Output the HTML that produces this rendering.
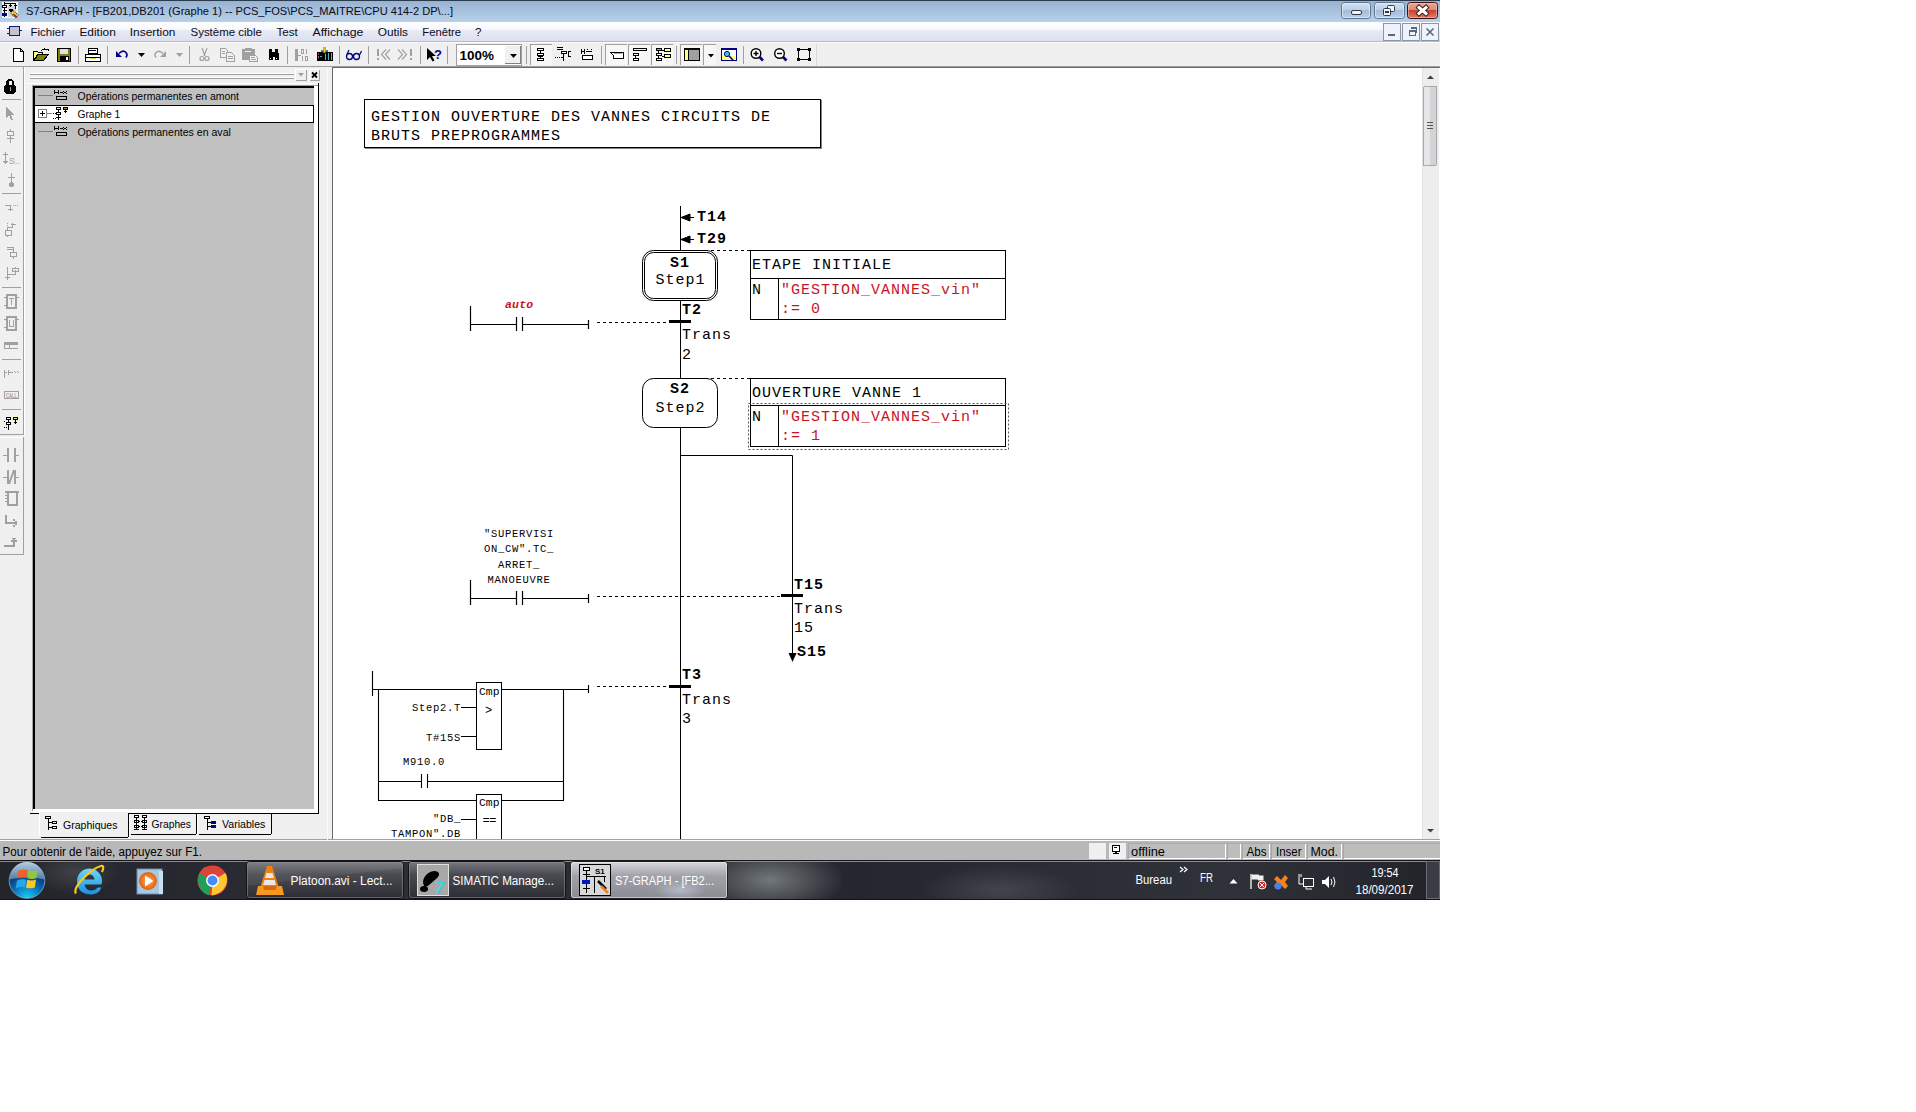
<!DOCTYPE html>
<html><head><meta charset="utf-8">
<style>
*{margin:0;padding:0;box-sizing:border-box}
html,body{width:1916px;height:1112px;background:#fff;overflow:hidden;font-family:"Liberation Sans",sans-serif;font-size:12px;color:#000}
.a{position:absolute}
svg{position:absolute;left:0;top:0;overflow:visible}
#title{left:0;top:0;width:1440px;height:22px;background:linear-gradient(#2b3b4e 0,#2b3b4e 1px,#98b2d0 1px,#a9c3df 12px,#b7d1ea 22px)}
#menu{left:0;top:22px;width:1440px;height:19px;background:linear-gradient(#fdfdfe 0,#f8f9fc 38%,#e9ebf5 42%,#dcdff0 100%)}
#mline{left:0;top:41px;width:1440px;height:2px;background:linear-gradient(#b9bcc6 0,#b9bcc6 1px,#fafafa 1px)}
#tool{left:0;top:43px;width:1440px;height:23px;background:#f0f0f0}
#tline{left:0;top:66px;width:1440px;height:1px;background:#a0a0a0}
#main{left:0;top:67px;width:1440px;height:773px;background:#f0f0f0}
#status{left:0;top:839px;width:1440px;height:21px;background:linear-gradient(#a0a0a0 0,#a0a0a0 1px,#fff 1px,#fff 2px,#b8b8b8 2px)}
#task{left:0;top:860px;width:1440px;height:40px;background:linear-gradient(90deg,#24242b 0,#2d2e36 30%,#26262e 60%,#303239 85%,#23232a 100%)}
</style></head><body>
<div id="title" class="a"></div>
<div id="menu" class="a"></div>
<div id="mline" class="a"></div>
<div id="tool" class="a"></div>
<div id="tline" class="a"></div>
<div id="main" class="a"></div>
<div id="status" class="a"></div>
<div id="task" class="a"></div>
<!-- canvas -->
<div class="a" style="left:332px;top:67px;width:1108px;height:772px;border-left:1px solid #6a6a6a;border-top:1px solid #6a6a6a;background:#fff"></div>
<div class="a" style="left:1422px;top:68px;width:17px;height:771px;background:#ededed;border-left:1px solid #e3e3e3"></div>
<svg width="1440" height="900" viewBox="0 0 1440 900">
<defs><clipPath id="cv"><rect x="333" y="68" width="1089" height="771"/></clipPath></defs>
<g font-family="Liberation Mono" fill="#000" clip-path="url(#cv)">
<!-- comment box -->
<rect x="365" y="100" width="457" height="49" fill="#808080"/>
<rect x="364.5" y="99.5" width="456" height="48" fill="#fff" stroke="#000"/>
<g font-size="15" letter-spacing="1">
<text x="371" y="120.7">GESTION OUVERTURE DES VANNES CIRCUITS DE</text>
<text x="371" y="139.7">BRUTS PREPROGRAMMES</text>
</g>
<!-- main line -->
<path d="M680.5 206V250M680.5 301V378M680.5 428V839" stroke="#000" fill="none"/>
<!-- incoming arrows -->
<path d="M681 217.5L690 214V221Z M688 217.5H694 M681 239.5L690 236V243Z M688 239.5H694" fill="#000" stroke="#000" stroke-width="1"/>
<g font-size="15" font-weight="bold" letter-spacing="1">
<text x="697" y="221">T14</text>
<text x="697" y="243">T29</text>
</g>
<!-- S1 double box -->
<rect x="642.5" y="250.5" width="75" height="50" rx="11" fill="#fff" stroke="#000"/>
<rect x="644.5" y="252.5" width="71" height="46" rx="9" fill="none" stroke="#000"/>
<text x="670" y="267" font-size="15" font-weight="bold" letter-spacing="1">S1</text>
<text x="655.5" y="284" font-size="15" letter-spacing="1">Step1</text>
<path d="M705 250.5H750" stroke="#000" stroke-dasharray="3,3"/>
<!-- action table 1 -->
<rect x="750.5" y="250.5" width="255" height="69" fill="none" stroke="#000"/>
<path d="M750 278.5H1006M778.5 279V320" stroke="#000"/>
<g font-size="15" letter-spacing="1">
<text x="752" y="268.7">ETAPE INITIALE</text>
<text x="752" y="293.8">N</text>
<text x="781" y="293.8" fill="#c8141e">"GESTION_VANNES_vin"</text>
<text x="781" y="313" fill="#c8141e">:= 0</text>
</g>
<!-- T2 -->
<rect x="669" y="320" width="22" height="3" fill="#000"/>
<g font-size="15" letter-spacing="1">
<text x="682" y="314.3" font-weight="bold">T2</text>
<text x="682" y="338.8">Trans</text>
<text x="682" y="358.7">2</text>
</g>
<path d="M597 322.5H669" stroke="#000" stroke-dasharray="3,3"/>
<!-- auto contact -->
<path d="M470.5 306V331M470 324.5H517M516.5 317V331M522.5 317V331M522 324.5H589M588.5 320V329" stroke="#000" stroke-width="1.2" fill="none"/>
<text x="505" y="308" font-size="11.5" font-weight="bold" fill="#c8141e" letter-spacing="0.2" font-style="italic">auto</text>
<!-- S2 -->
<rect x="642.5" y="378.5" width="75" height="49" rx="11" fill="#fff" stroke="#000"/>
<text x="670" y="393" font-size="15" font-weight="bold" letter-spacing="1">S2</text>
<text x="655.5" y="412" font-size="15" letter-spacing="1">Step2</text>
<path d="M705 378.5H750" stroke="#000" stroke-dasharray="3,3"/>
<!-- action table 2 -->
<rect x="750.5" y="378.5" width="255" height="68" fill="none" stroke="#000"/>
<path d="M750 405.5H1006M778.5 406V447" stroke="#000"/>
<rect x="748.5" y="403.5" width="260" height="46" fill="none" stroke="#555" stroke-dasharray="2,2"/>
<g font-size="15" letter-spacing="1">
<text x="752" y="396.5">OUVERTURE VANNE 1</text>
<text x="752" y="420.5">N</text>
<text x="781" y="420.5" fill="#c8141e">"GESTION_VANNES_vin"</text>
<text x="781" y="440.4" fill="#c8141e">:= 1</text>
</g>
<!-- branch -->
<path d="M680 455.5H792.5V654" stroke="#000" fill="none"/>
<path d="M788.5 653H796.5L792.5 662Z" fill="#000"/>
<rect x="781" y="594" width="22" height="3" fill="#000"/>
<g font-size="15" letter-spacing="1">
<text x="794" y="589" font-weight="bold">T15</text>
<text x="794" y="612.7">Trans</text>
<text x="794" y="632.3">15</text>
<text x="797" y="656.1" font-weight="bold">S15</text>
</g>
<path d="M597 596.5H781" stroke="#000" stroke-dasharray="3,3"/>
<!-- supervision contact -->
<path d="M470.5 580V605M470 598.5H517M516.5 591V605M522.5 591V605M522 598.5H589M588.5 594V603" stroke="#000" stroke-width="1.2" fill="none"/>
<g font-size="10.5" letter-spacing="0.7" text-anchor="middle">
<text x="519" y="537">"SUPERVISI</text>
<text x="519" y="552">ON_CW".TC_</text>
<text x="519" y="567.8">ARRET_</text>
<text x="519" y="582.8">MANOEUVRE</text>
</g>
<!-- T3 -->
<rect x="669" y="685" width="22" height="3" fill="#000"/>
<g font-size="15" letter-spacing="1">
<text x="682" y="678.8" font-weight="bold">T3</text>
<text x="682" y="703.7">Trans</text>
<text x="682" y="722.5">3</text>
</g>
<path d="M597 686.5H669" stroke="#000" stroke-dasharray="3,3"/>
<!-- T3 network -->
<path d="M372.5 671V696M372 689.5H476.5M501.5 689.5H589M588.5 685V693M378.5 689V800.5M563.5 689V800.5M378 781.5H421.5M421.5 774V788M427.5 774V788M427.5 781.5H564M378 800.5H476.5M501.5 800.5H564M461 707.5H476.5M461 736.5H476.5M461 819.5H476.5" stroke="#000" stroke-width="1.1" fill="none"/>
<rect x="476.5" y="682.5" width="25" height="67" fill="#fff" stroke="#000"/>
<rect x="476.5" y="794.5" width="25" height="60" fill="#fff" stroke="#000"/>
<g font-size="10.5" letter-spacing="0.7">
<text x="479" y="695" font-size="11" letter-spacing="0" textLength="20.5" lengthAdjust="spacingAndGlyphs">Cmp</text>
<text x="479" y="806" font-size="11" letter-spacing="0" textLength="20.5" lengthAdjust="spacingAndGlyphs">Cmp</text>
<text x="485" y="714" font-size="12">&gt;</text>
<text x="482.5" y="824" font-size="12" letter-spacing="-0.5">==</text>
<text x="461" y="711" text-anchor="end">Step2.T</text>
<text x="461" y="740.6" text-anchor="end">T#15S</text>
<text x="403" y="765">M910.0</text>
<text x="461" y="822.4" text-anchor="end">"DB_</text>
<text x="461" y="837.4" text-anchor="end">TAMPON".DB</text>
</g>
</g>
</svg>
<svg width="1440" height="900" viewBox="0 0 1440 900">
<defs>
<linearGradient id="gbtn" x1="0" y1="0" x2="0" y2="1"><stop offset="0" stop-color="#d2e1f1"/><stop offset="0.45" stop-color="#bcd0e6"/><stop offset="0.5" stop-color="#a5bdd8"/><stop offset="1" stop-color="#b9d0e9"/></linearGradient>
<linearGradient id="gcls" x1="0" y1="0" x2="0" y2="1"><stop offset="0" stop-color="#eba89a"/><stop offset="0.45" stop-color="#dd8a78"/><stop offset="0.5" stop-color="#c9452b"/><stop offset="1" stop-color="#e0806a"/></linearGradient>
</defs>
<!-- ===== TITLE BAR ===== -->
<g shape-rendering="crispEdges">
<rect x="2" y="2" width="16" height="16" fill="#f4f4f4"/>
<rect x="8" y="6" width="8" height="11" fill="#d4d4d4"/>
<rect x="4" y="2" width="1" height="15" fill="#000"/>
<rect x="4" y="3" width="12" height="1" fill="#000"/>
<rect x="2" y="5" width="5" height="3" fill="#000"/><rect x="3" y="6" width="3" height="1" fill="#fff"/>
<rect x="3" y="10" width="4" height="1" fill="#000"/>
<rect x="2" y="13" width="5" height="3" fill="#000a80"/>
<rect x="10" y="3" width="1" height="4" fill="#000"/><rect x="9" y="5" width="3" height="1" fill="#000"/>
<rect x="15" y="3" width="1" height="6" fill="#000"/><rect x="14" y="5" width="3" height="1" fill="#000"/>
<rect x="9" y="9" width="4" height="2" fill="#000"/><rect x="10" y="11" width="2" height="1" fill="#000"/>
</g>
<path d="M12 12L17.5 17" stroke="#000" stroke-width="4.5" stroke-dasharray="1,1"/>
<path d="M12 12L17.5 17" stroke="#f0e040" stroke-width="3"/>
<path d="M13 14L17.5 17.5" stroke="#a01000" stroke-width="1.5"/>
<text x="26" y="15" font-size="11.6" fill="#0a0a14" textLength="427" lengthAdjust="spacingAndGlyphs">S7-GRAPH - [FB201,DB201 (Graphe 1) -- PCS_FOS\PCS_MAITRE\CPU 414-2 DP\...]</text>
<!-- window buttons -->
<rect x="1341.5" y="2.5" width="29" height="16" rx="3" fill="url(#gbtn)" stroke="#5a7492"/>
<rect x="1342.5" y="3.5" width="27" height="14" rx="2" fill="none" stroke="#e6f0fa" stroke-opacity="0.7"/>
<rect x="1351.5" y="10.5" width="10" height="4" rx="1.5" fill="#f4f4f4" stroke="#2c3a4c"/>
<rect x="1374.5" y="2.5" width="30" height="16" rx="3" fill="url(#gbtn)" stroke="#5a7492"/>
<rect x="1375.5" y="3.5" width="28" height="14" rx="2" fill="none" stroke="#e6f0fa" stroke-opacity="0.7"/>
<rect x="1387.5" y="5.5" width="7" height="6" rx="1" fill="#f4f4f4" stroke="#2c3a4c"/>
<rect x="1383.5" y="8.5" width="7" height="7" rx="1" fill="#f4f4f4" stroke="#2c3a4c"/>
<rect x="1385.5" y="11.5" width="3" height="1" fill="none" stroke="#2c3a4c"/>
<rect x="1407.5" y="2.5" width="30" height="16" rx="3" fill="url(#gcls)" stroke="#3d1212"/>
<rect x="1408.5" y="3.5" width="28" height="14" rx="2" fill="none" stroke="#f6c6bb" stroke-opacity="0.6"/>
<path d="M1419 7.5L1426 13.5M1426 7.5L1419 13.5" stroke="#3a2020" stroke-width="5" stroke-linecap="square"/>
<path d="M1419 7.5L1426 13.5M1426 7.5L1419 13.5" stroke="#fff" stroke-width="3" stroke-linecap="square"/>
<!-- ===== MENU BAR ===== -->
<g shape-rendering="crispEdges">
<rect x="9" y="26" width="10" height="9" fill="#c4c4c4" stroke="#0a1a8a" stroke-width="1"/>
<rect x="7" y="28" width="2" height="1" fill="#0a1a8a"/><rect x="7" y="33" width="2" height="1" fill="#0a1a8a"/><rect x="19" y="30" width="3" height="1" fill="#0a1a8a"/>
</g>
<g font-size="11.6" fill="#0c0c18">
<text x="30.5" y="35.6" textLength="34.5" lengthAdjust="spacingAndGlyphs">Fichier</text>
<text x="79.4" y="35.6" textLength="36.4" lengthAdjust="spacingAndGlyphs">Edition</text>
<text x="129.8" y="35.6" textLength="45.6" lengthAdjust="spacingAndGlyphs">Insertion</text>
<text x="190.5" y="35.6" textLength="71.4" lengthAdjust="spacingAndGlyphs">Système cible</text>
<text x="276.4" y="35.6" textLength="21.3" lengthAdjust="spacingAndGlyphs">Test</text>
<text x="312.5" y="35.6" textLength="50.9" lengthAdjust="spacingAndGlyphs">Affichage</text>
<text x="377.7" y="35.6" textLength="30.3" lengthAdjust="spacingAndGlyphs">Outils</text>
<text x="422.3" y="35.6" textLength="38.7" lengthAdjust="spacingAndGlyphs">Fenêtre</text>
<text x="475" y="35.6">?</text>
</g>
<g shape-rendering="crispEdges" fill="#eef2fa" stroke="#8a97a8">
<rect x="1383.5" y="23.5" width="17" height="17"/>
<rect x="1402.5" y="23.5" width="17" height="17"/>
<rect x="1421.5" y="23.5" width="17" height="17"/>
</g>
<g shape-rendering="crispEdges" fill="#5a6878">
<rect x="1388" y="34" width="7" height="2"/>
<path d="M1409 30h7v2h-7zM1409 30h1v6h-1zM1409 35h6v1h-6zM1415 30h1v6h-1zM1411 27h6v2h-6zM1416 27h1v6h-1z"/>
</g>
<path d="M1426.5 28.5L1433.5 35.5M1433.5 28.5L1426.5 35.5" stroke="#5a6878" stroke-width="1.6"/>
<!-- ===== TOOLBAR ===== -->
<g shape-rendering="crispEdges">
<!-- new -->
<path d="M13.5 48.5h7l3 3v9.5h-10z" fill="#fff" stroke="#000"/>
<path d="M20.5 48.5v3h3" fill="none" stroke="#000"/>
<!-- open -->
<path d="M33.5 51.5h4l1 1h4v2h-5l-4 6z" fill="#ffff80" stroke="#000"/>
<path d="M33.5 60.5h10l5-6h-10z" fill="#808000" stroke="#000"/>
<path d="M41 51q3-3.5 6-1" fill="none" stroke="#000" stroke-width="1.2"/>
<path d="M45.5 48.5h3v3z" fill="#000"/>
<!-- save -->
<rect x="57.5" y="48.5" width="13" height="13" fill="#808000" stroke="#000"/>
<rect x="60" y="49" width="8" height="5" fill="#e0e0e0"/>
<rect x="60" y="56" width="9" height="5" fill="#000"/>
<rect x="66" y="57" width="2" height="3" fill="#fff"/>
<!-- sep -->
<rect x="78" y="46" width="1" height="18" fill="#a0a0a0"/>
<!-- print -->
<path d="M88.5 48.5h9v5h-9z" fill="#fff" stroke="#000"/>
<path d="M85.5 54.5h15v7h-15z" fill="#fff" stroke="#000"/>
<rect x="86" y="57" width="14" height="1" fill="#000"/>
<rect x="90" y="58" width="6" height="1" fill="#c0e040"/>
<rect x="89" y="50" width="7" height="1" fill="#000"/>
<!-- sep -->
<rect x="107" y="46" width="1" height="18" fill="#a0a0a0"/>
</g>
<!-- undo -->
<path d="M119 53.5q4-4 7-1q2 2 0 5" fill="none" stroke="#000080" stroke-width="1.6"/>
<path d="M116 51v6h6z" fill="#000080"/>
<path d="M138 53h7l-3.5 4z" fill="#000"/>
<path d="M163 53.5q-4-4-7-1q-2 2 0 5" fill="none" stroke="#a0a0a0" stroke-width="1.4"/>
<path d="M166 51v6h-6z" fill="#a0a0a0"/>
<path d="M176 53h7l-3.5 4z" fill="#a0a0a0"/>
<g shape-rendering="crispEdges">
<rect x="189" y="46" width="1" height="18" fill="#a0a0a0"/>
</g>
<!-- scissors -->
<path d="M202 48l3 8M207 48l-3 8" stroke="#a0a0a0" stroke-width="1.2"/>
<circle cx="202" cy="58.5" r="2" fill="none" stroke="#a0a0a0" stroke-width="1.2"/>
<circle cx="207" cy="58.5" r="2" fill="none" stroke="#a0a0a0" stroke-width="1.2"/>
<g shape-rendering="crispEdges">
<!-- copy -->
<path d="M220.5 48.5h5l2 2v6.5h-7z" fill="#f0f0f0" stroke="#a0a0a0"/>
<path d="M226.5 52.5h5l3 3v5.5h-8z" fill="#f0f0f0" stroke="#a0a0a0"/>
<rect x="222" y="51" width="3" height="1" fill="#a0a0a0"/><rect x="222" y="53" width="3" height="1" fill="#a0a0a0"/>
<rect x="228" y="56" width="5" height="1" fill="#a0a0a0"/><rect x="228" y="58" width="5" height="1" fill="#a0a0a0"/>
<!-- paste -->
<rect x="242" y="49" width="13" height="11" fill="#a0a0a0"/>
<rect x="245" y="48" width="7" height="2" fill="#a0a0a0"/>
<rect x="245" y="51" width="6" height="1" fill="#f0f0f0"/>
<path d="M249.5 55.5h6l2 2v4h-8z" fill="#f0f0f0" stroke="#a0a0a0"/>
<rect x="251" y="57" width="4" height="1" fill="#a0a0a0"/><rect x="251" y="59" width="5" height="1" fill="#a0a0a0"/>
<!-- binoculars -->
<path d="M269 49h3v3h3v-3h3v4h1v7h-4v-3h-2v3h-4v-7h0z" fill="#000"/>
<rect x="270" y="58" width="1" height="1" fill="#fff"/><rect x="276" y="58" width="1" height="1" fill="#fff"/>
<rect x="287" y="46" width="1" height="18" fill="#a0a0a0"/>
<!-- compile gray -->
<path d="M295.5 49.5h2v11h-2z" fill="none" stroke="#a0a0a0" stroke-width="1"/>
<rect x="295" y="49" width="3" height="12" fill="#a0a0a0"/>
<path d="M298 55h3" stroke="#a0a0a0"/>
<rect x="301.5" y="49.5" width="2" height="4" fill="none" stroke="#a0a0a0"/>
<rect x="306" y="49" width="1" height="5" fill="#a0a0a0"/>
<rect x="302" y="56" width="1" height="5" fill="#a0a0a0"/>
<rect x="305.5" y="56.5" width="2" height="4" fill="none" stroke="#a0a0a0"/>
<!-- download -->
<rect x="317" y="52" width="16" height="9" fill="#000"/>
<rect x="325" y="53" width="1" height="7" fill="#40c0c0"/><rect x="328" y="53" width="1" height="7" fill="#40c0c0"/><rect x="331" y="53" width="1" height="7" fill="#40c0c0"/>
<rect x="318" y="53" width="1" height="2" fill="#c04040"/><rect x="318" y="56" width="1" height="2" fill="#808080"/>
<path d="M320 56l2 1" stroke="#40c0c0"/>
</g>
<path d="M324.5 47v5M321.5 50.5l3 3l3-3" fill="none" stroke="#000" stroke-width="1.6"/>
<path d="M324.5 47v5M322.5 51l2 2l2-2" fill="none" stroke="#ffff40" stroke-width="0.8"/>
<g shape-rendering="crispEdges">
<rect x="339" y="46" width="1" height="18" fill="#a0a0a0"/>
</g>
<!-- glasses -->
<circle cx="349.5" cy="56.5" r="3" fill="none" stroke="#000080" stroke-width="1.3"/>
<circle cx="356.5" cy="56.5" r="3" fill="none" stroke="#000080" stroke-width="1.3"/>
<path d="M347 54l2-4M359.5 55l2-4" fill="none" stroke="#000080" stroke-width="1.2"/>
<g shape-rendering="crispEdges">
<rect x="368" y="46" width="1" height="18" fill="#a0a0a0"/>
<rect x="377" y="49" width="2" height="7" fill="#a0a0a0"/><rect x="377" y="58" width="2" height="2" fill="#a0a0a0"/>
<rect x="410" y="49" width="2" height="7" fill="#a0a0a0"/><rect x="410" y="58" width="2" height="2" fill="#a0a0a0"/>
</g>
<path d="M386 49.5l-4.5 5l4.5 5M390 49.5l-4.5 5l4.5 5" fill="none" stroke="#a0a0a0" stroke-width="1.2"/>
<path d="M398 49.5l4.5 5l-4.5 5M402 49.5l4.5 5l-4.5 5" fill="none" stroke="#a0a0a0" stroke-width="1.2"/>
<g shape-rendering="crispEdges">
<rect x="420" y="46" width="1" height="18" fill="#a0a0a0"/>
</g>
<!-- help -->
<path d="M427 48v12l3-3l2.5 4.5l2-1l-2.5-4.5h4z" fill="#000"/>
<text x="434" y="59" font-size="13" font-weight="bold" fill="#000080">?</text>
<g shape-rendering="crispEdges">
<rect x="447" y="46" width="1" height="18" fill="#a0a0a0"/>
<!-- combo -->
<rect x="456" y="44" width="66" height="22" fill="#a0a0a0"/>
<rect x="457" y="45" width="64" height="20" fill="#fff"/>
<rect x="505" y="46" width="16" height="18" fill="#f0f0f0"/>
<rect x="505" y="63" width="16" height="1" fill="#808080"/><rect x="520" y="46" width="1" height="18" fill="#808080"/>
</g>
<path d="M510 54h7l-3.5 4z" fill="#000"/>
<text x="459.5" y="59.7" font-size="13" font-weight="bold" textLength="34.5" lengthAdjust="spacingAndGlyphs">100%</text>
<g shape-rendering="crispEdges">
<rect x="526" y="46" width="1" height="18" fill="#a0a0a0"/>
<!-- pressed buttons -->
<path d="M530.5 65V44.5H552" fill="#f7f7f7" stroke="#a0a0a0"/>
<rect x="531" y="45" width="21" height="20" fill="#f7f7f7"/>
<rect x="601" y="46" width="1" height="18" fill="#a0a0a0"/>
<rect x="605" y="44" width="22" height="21" fill="#a0a0a0"/><rect x="606" y="45" width="21" height="20" fill="#f7f7f7"/>
<rect x="628" y="44" width="22" height="21" fill="#a0a0a0"/><rect x="629" y="45" width="21" height="20" fill="#f7f7f7"/>
<rect x="651" y="44" width="22" height="21" fill="#a0a0a0"/><rect x="652" y="45" width="21" height="20" fill="#f7f7f7"/>
<rect x="676" y="46" width="1" height="18" fill="#a0a0a0"/>
<rect x="680" y="44" width="22" height="21" fill="#a0a0a0"/><rect x="681" y="45" width="21" height="20" fill="#f7f7f7"/>
<rect x="703" y="44" width="13" height="21" fill="#a0a0a0"/><rect x="704" y="45" width="12" height="20" fill="#f7f7f7"/>
<rect x="743" y="46" width="1" height="18" fill="#a0a0a0"/>
<rect x="816" y="44" width="1" height="22" fill="#d8d8d8"/>
<!-- sfc view icon -->
<rect x="537" y="48" width="7" height="3" fill="#000"/><rect x="538" y="49" width="5" height="1" fill="#fff"/>
<rect x="540" y="51" width="1" height="10" fill="#000"/>
<rect x="537" y="53" width="7" height="3" fill="#000"/><rect x="538" y="54" width="5" height="1" fill="#fff"/>
<rect x="537" y="58" width="7" height="3" fill="#000"/><rect x="538" y="59" width="5" height="1" fill="#fff"/>
<rect x="538" y="56" width="5" height="1" fill="#000"/>
<!-- icon 2 -->
<rect x="557" y="47" width="6" height="1" fill="#000"/><rect x="557" y="49" width="6" height="1" fill="#000"/>
<rect x="561" y="51" width="6" height="3" fill="#000"/><rect x="562" y="52" width="4" height="1" fill="#fff"/>
<rect x="563" y="54" width="1" height="7" fill="#000"/>
<rect x="555" y="57" width="1" height="1" fill="#000"/><rect x="557" y="57" width="1" height="1" fill="#000"/><rect x="559" y="57" width="1" height="1" fill="#000"/><rect x="561" y="57" width="2" height="1" fill="#000"/>
<rect x="568" y="51" width="1" height="6" fill="#000"/><rect x="568" y="51" width="3" height="1" fill="#000"/><rect x="568" y="56" width="3" height="1" fill="#000"/>
<!-- icon 3 -->
<rect x="581" y="49" width="1" height="5" fill="#000"/><rect x="581" y="51" width="4" height="1" fill="#000"/><rect x="584" y="49" width="1" height="5" fill="#000"/>
<rect x="586" y="51" width="6" height="1" fill="#000"/><rect x="587" y="49" width="1" height="1" fill="#000"/><rect x="591" y="49" width="1" height="1" fill="#000"/>
<rect x="582" y="55" width="11" height="5" fill="#000"/><rect x="583" y="56" width="9" height="3" fill="#fff"/>
<!-- comment icon -->
<path d="M610 52l3 3v3h10v-6z" fill="#fff" stroke="#000"/>
<rect x="614" y="53" width="8" height="1" fill="#40c8d8"/>
<!-- yellow -->
<rect x="633" y="48" width="14" height="3" fill="#000"/><rect x="634" y="49" width="12" height="1" fill="#ffff80"/>
<rect x="633" y="53" width="6" height="3" fill="#000"/><rect x="634" y="54" width="4" height="1" fill="#fff"/>
<rect x="635" y="56" width="1" height="3" fill="#000"/>
<rect x="633" y="58" width="6" height="3" fill="#000"/><rect x="634" y="59" width="4" height="1" fill="#fff"/>
<!-- icon graph -->
<rect x="656" y="48" width="6" height="3" fill="#000"/><rect x="657" y="49" width="4" height="1" fill="#40c0c0"/>
<rect x="658" y="51" width="1" height="10" fill="#000"/>
<rect x="656" y="53" width="6" height="3" fill="#000"/><rect x="657" y="54" width="4" height="1" fill="#fff"/>
<rect x="656" y="58" width="6" height="3" fill="#000"/><rect x="657" y="59" width="4" height="1" fill="#fff"/>
<rect x="664" y="48" width="7" height="4" fill="#000"/><rect x="665" y="49" width="5" height="2" fill="#ffff80"/>
<rect x="664" y="54" width="7" height="4" fill="#000"/><rect x="665" y="55" width="5" height="2" fill="#ffff80"/>
<rect x="662" y="50" width="2" height="1" fill="#000"/><rect x="662" y="56" width="2" height="1" fill="#000"/>
<!-- window icon -->
<rect x="684" y="48" width="16" height="13" fill="#000"/><rect x="685" y="50" width="3" height="10" fill="#ffff80"/><rect x="689" y="50" width="10" height="10" fill="#a0a0a0"/>
<rect x="685" y="49" width="14" height="1" fill="#000080"/>
<!-- magnifier window -->
<rect x="721" y="48" width="16" height="13" fill="#000080"/><rect x="722" y="50" width="14" height="10" fill="#fff"/><rect x="722" y="56" width="14" height="4" fill="#ffff80"/>
<!-- zoom in/out/fit -->
<rect x="798" y="49" width="12" height="11" fill="none" stroke="#000" stroke-width="0"/>
<path d="M798.5 49.5h11v10h-11z" fill="none" stroke="#000" stroke-width="1.4"/>
<rect x="797" y="48" width="3" height="3" fill="#000"/><rect x="808" y="48" width="3" height="3" fill="#000"/><rect x="797" y="58" width="3" height="3" fill="#000"/><rect x="808" y="58" width="3" height="3" fill="#000"/>
</g>
<path d="M708 54h6l-3 3.5z" fill="#000"/>
<circle cx="727" cy="54" r="2.6" fill="#40c8d8" stroke="#000080" stroke-width="1"/>
<path d="M729 56l4 4" stroke="#000080" stroke-width="1.6"/>
<circle cx="756" cy="53.5" r="4.8" fill="#fff" stroke="#000" stroke-width="1.4"/>
<path d="M753.5 53.5h5M756 51v5" stroke="#000" stroke-width="1.4"/>
<path d="M759.5 57l3.5 3.5" stroke="#000080" stroke-width="2.6"/>
<circle cx="779.5" cy="53.5" r="4.8" fill="#fff" stroke="#000" stroke-width="1.4"/>
<path d="M777 53.5h5" stroke="#000" stroke-width="1.4"/>
<path d="M783 57l3.5 3.5" stroke="#000080" stroke-width="2.6"/>
<!-- ===== LEFT TOOLBAR ===== -->
<g shape-rendering="crispEdges">
<rect x="23" y="67" width="1" height="368" fill="#a0a0a0"/><rect x="24" y="67" width="1" height="368" fill="#fff"/>
<rect x="0" y="434" width="23" height="1" fill="#a0a0a0"/>
<rect x="0" y="437" width="24" height="1" fill="#fff"/>
<rect x="23" y="437" width="1" height="118" fill="#a0a0a0"/>
<rect x="0" y="554" width="24" height="1" fill="#a0a0a0"/>
<!-- lock -->
<path d="M8 79h4v1h1v1h1v4h1v1h1v6h-1v1h-1v1h-8v-1h-1v-1h-1v-6h1v-1h1v-4h1v-1h1z" fill="#000"/>
<rect x="9" y="81" width="3" height="4" fill="#f0f0f0"/>
<rect x="10" y="87" width="1" height="4" fill="#a0a0a0"/>
<rect x="2" y="99" width="19" height="1" fill="#a0a0a0"/>
<rect x="2" y="193" width="19" height="1" fill="#a0a0a0"/>
<rect x="2" y="287" width="19" height="1" fill="#a0a0a0"/>
<rect x="2" y="359" width="19" height="1" fill="#a0a0a0"/>
<rect x="2" y="409" width="19" height="1" fill="#a0a0a0"/>
</g>
<g fill="#a0a0a0" shape-rendering="crispEdges">
<!-- pointer -->
<path d="M6 107v11l3-3l2 5h2l-2-5h4z"/>
<!-- step icon -->
<rect x="10" y="129" width="1" height="14"/><rect x="7" y="131" width="7" height="5"/><rect x="8" y="132" width="5" height="3" fill="#f0f0f0"/><rect x="7" y="138" width="7" height="1"/>
<!-- ts -->
<rect x="5" y="152" width="1" height="11"/><rect x="3" y="154" width="5" height="1"/><path d="M3 161h5l-2.5 3z"/>
<text x="9" y="164" font-size="9" fill="#a0a0a0">S..</text>
<!-- 4 -->
<rect x="11" y="173" width="1" height="10"/><rect x="8" y="177" width="7" height="1"/>
<!-- 5 -->
<rect x="5" y="205" width="6" height="1"/><rect x="13" y="205" width="1" height="1"/><rect x="15" y="205" width="1" height="1"/><rect x="17" y="205" width="1" height="1"/>
<rect x="10" y="205" width="1" height="6"/><rect x="8" y="209" width="5" height="1"/>
<!-- 6 -->
<rect x="5" y="230" width="6" height="5" fill="none" stroke="#a0a0a0"/><rect x="7" y="223" width="1" height="1"/><rect x="7" y="225" width="1" height="1"/>
<rect x="7" y="227" width="1" height="3"/><rect x="7" y="227" width="6" height="1"/><rect x="12" y="223" width="1" height="5"/><rect x="11" y="224" width="5" height="1"/><rect x="7" y="235" width="1" height="2"/>
<!-- 7 -->
<rect x="7" y="247" width="7" height="1"/><rect x="7" y="249" width="6" height="1"/><rect x="13" y="247" width="1" height="6"/>
<rect x="10.5" y="252.5" width="6" height="4" fill="none" stroke="#a0a0a0"/><rect x="13" y="257" width="1" height="2"/>
<!-- 8 -->
<rect x="7" y="267" width="1" height="13"/><rect x="5" y="277" width="5" height="1"/><rect x="7" y="274" width="9" height="1"/><rect x="15" y="270" width="1" height="4"/>
<rect x="12.5" y="268.5" width="6" height="3" fill="none" stroke="#a0a0a0"/><rect x="15" y="267" width="1" height="1"/>
<!-- T icon -->
<rect x="6" y="294" width="11" height="15"/><rect x="8" y="296" width="7" height="11" fill="#f0f0f0"/>
<rect x="4" y="297" width="2" height="1"/><rect x="4" y="305" width="2" height="1"/><rect x="17" y="297" width="2" height="1"/>
<rect x="9" y="298" width="5" height="1"/><rect x="11" y="298" width="1" height="7"/>
<!-- U icon -->
<rect x="6" y="316" width="11" height="15"/><rect x="8" y="318" width="7" height="11" fill="#f0f0f0"/>
<rect x="4" y="319" width="2" height="1"/><rect x="4" y="327" width="2" height="1"/><rect x="17" y="319" width="2" height="1"/>
<rect x="9" y="320" width="1" height="6"/><rect x="13" y="320" width="1" height="6"/><rect x="9" y="326" width="5" height="1"/>
<!-- flat -->
<rect x="4" y="342" width="14" height="3"/><rect x="4" y="345" width="1" height="4"/><rect x="4" y="348" width="14" height="1"/><rect x="9" y="345" width="1" height="4"/>
<!-- dashed -->
<rect x="4" y="370" width="1" height="8"/><rect x="4" y="372" width="3" height="1"/><rect x="8" y="370" width="1" height="5"/><rect x="9" y="372" width="4" height="1"/><rect x="14" y="371" width="1" height="1"/><rect x="15" y="372" width="1" height="1"/><rect x="17" y="371" width="1" height="1"/><rect x="18" y="372" width="1" height="1"/>
<!-- CALL -->
<rect x="4.5" y="391.5" width="14" height="7" fill="none" stroke="#a0a0a0"/>
<text x="6" y="398" font-size="6.5" font-weight="bold" fill="#a0a0a0" textLength="11" lengthAdjust="spacingAndGlyphs">CALL</text>
<!-- contacts -->
<rect x="3" y="455" width="5" height="1"/><rect x="7" y="448" width="2" height="14"/><rect x="14" y="448" width="2" height="14"/><rect x="16" y="455" width="3" height="1"/>
<rect x="3" y="477" width="5" height="1"/><rect x="7" y="470" width="2" height="14"/><rect x="14" y="470" width="2" height="14"/><rect x="16" y="477" width="3" height="1"/>
<rect x="5" y="491" width="14" height="2"/><rect x="7" y="491" width="2" height="15"/><rect x="16" y="491" width="2" height="15"/><rect x="7" y="504" width="11" height="2"/><rect x="5" y="495" width="2" height="1"/><rect x="5" y="498" width="2" height="1"/><rect x="5" y="501" width="2" height="1"/>
<rect x="5" y="515" width="2" height="9"/><rect x="5" y="522" width="11" height="2"/><rect x="13" y="519" width="2" height="2"/><rect x="15" y="521" width="2" height="4"/><rect x="13" y="525" width="2" height="2"/>
<rect x="4" y="545" width="11" height="2"/><rect x="13" y="539" width="2" height="7"/><rect x="11" y="540" width="2" height="2"/><rect x="15" y="540" width="2" height="2"/><rect x="12" y="538" width="4" height="1"/>
</g>
<path d="M9 484L14 470" stroke="#a0a0a0" stroke-width="2"/>
<circle cx="11.5" cy="184.5" r="2.6" fill="#a0a0a0"/>
<g shape-rendering="crispEdges">
<!-- colored graph icon -->
<rect x="6" y="417" width="5" height="3" fill="#000"/><rect x="7" y="418" width="3" height="1" fill="#fff"/>
<rect x="8" y="420" width="1" height="10" fill="#000"/>
<rect x="6" y="422" width="5" height="3" fill="#000"/><rect x="7" y="423" width="3" height="1" fill="#fff"/>
<rect x="4" y="421" width="1" height="1" fill="#000"/><rect x="4" y="427" width="1" height="1" fill="#000"/><rect x="6" y="427" width="1" height="1" fill="#000"/>
<rect x="13" y="417" width="5" height="3" fill="#000"/><rect x="14" y="418" width="3" height="1" fill="#ffff40"/><rect x="15" y="420" width="1" height="4" fill="#000"/><rect x="14" y="422" width="3" height="1" fill="#000"/>
</g>
<!-- ===== TREE PANEL ===== -->
<g shape-rendering="crispEdges">
<rect x="30" y="73" width="264" height="1" fill="#fff"/><rect x="30" y="74" width="264" height="1" fill="#a0a0a0"/>
<rect x="30" y="77" width="264" height="1" fill="#fff"/><rect x="30" y="78" width="264" height="1" fill="#a0a0a0"/>
<rect x="295" y="69" width="12" height="12" fill="#fff"/><rect x="296" y="70" width="11" height="11" fill="#a0a0a0"/><rect x="296" y="70" width="10" height="10" fill="#f0f0f0"/>
<rect x="309" y="69" width="11" height="12" fill="#fff"/><rect x="310" y="70" width="10" height="11" fill="#a0a0a0"/><rect x="310" y="70" width="9" height="10" fill="#f0f0f0"/>
</g>
<path d="M298 73h6l-3 3.5z" fill="#a0a0a0"/>
<path d="M312 72.5l5 5M317 72.5l-5 5" stroke="#000" stroke-width="1.8"/>
<g shape-rendering="crispEdges">
<rect x="26" y="83" width="293" height="1" fill="#fff"/>
<rect x="318" y="83" width="1" height="731" fill="#000"/>
<rect x="32" y="85" width="286" height="1" fill="#a0a0a0"/><rect x="32" y="85" width="1" height="726" fill="#a0a0a0"/>
<rect x="33" y="86" width="285" height="2" fill="#000"/><rect x="33" y="86" width="2" height="724" fill="#000"/>
<rect x="35" y="88" width="279" height="721" fill="#c0c0c0"/>
<rect x="314" y="86" width="4" height="727" fill="#fff"/>
<rect x="33" y="809" width="285" height="4" fill="#fff"/>
<rect x="129" y="813" width="190" height="1" fill="#000"/>
<rect x="30" y="813" width="9" height="1" fill="#000"/>
<!-- selected row -->
<rect x="35" y="105" width="279" height="18" fill="#000"/><rect x="35" y="106" width="278" height="16" fill="#fff"/>
<!-- row icons -->
<rect x="38" y="95" width="15" height="1" fill="#808080"/><rect x="38" y="131" width="15" height="1" fill="#808080"/>
</g>
<g fill="#000" shape-rendering="crispEdges">
<path d="M54 90h1v4h-1zM58 90h1v4h-1zM55 92h3v1h-3zM60 92h3v1h-3zM63 91h1v1h-1zM64 92h1v1h-1zM63 93h1v1h-1zM66 91h1v1h-1zM65 92h1v1h-1zM66 93h1v1h-1z"/>
<rect x="56" y="96" width="11" height="4"/><rect x="57" y="97" width="9" height="2" fill="#c0c0c0"/>
<path d="M54 126h1v4h-1zM58 126h1v4h-1zM55 128h3v1h-3zM60 128h3v1h-3zM63 127h1v1h-1zM64 128h1v1h-1zM63 129h1v1h-1zM66 127h1v1h-1zM65 128h1v1h-1zM66 129h1v1h-1z"/>
<rect x="56" y="132" width="11" height="4"/><rect x="57" y="133" width="9" height="2" fill="#c0c0c0"/>
<!-- plus box -->
<rect x="38" y="109" width="9" height="9" fill="#808080"/><rect x="39" y="110" width="7" height="7" fill="#fff"/>
<rect x="40" y="113" width="5" height="1"/><rect x="42" y="111" width="1" height="5"/>
<rect x="47" y="113" width="5" height="1" fill="#808080"/>
<rect x="53" y="113" width="1" height="1"/><rect x="53" y="118" width="1" height="1"/><rect x="55" y="113" width="1" height="1"/><rect x="55" y="118" width="1" height="1"/>
<rect x="56" y="107" width="5" height="3"/><rect x="57" y="108" width="3" height="1" fill="#fff"/>
<rect x="58" y="110" width="1" height="10"/>
<rect x="56" y="112" width="5" height="3"/><rect x="57" y="113" width="3" height="1" fill="#fff"/>
<rect x="56" y="117" width="5" height="1"/>
<rect x="63" y="107" width="5" height="3"/><rect x="64" y="108" width="3" height="1" fill="#a0a040"/><rect x="65" y="110" width="1" height="3"/><rect x="64" y="111" width="3" height="1"/>
</g>
<g font-size="11.8" fill="#000">
<text x="77.5" y="100" textLength="161.5" lengthAdjust="spacingAndGlyphs">Opérations permanentes en amont</text>
<text x="77.5" y="117.6" textLength="42.6" lengthAdjust="spacingAndGlyphs">Graphe 1</text>
<text x="77.5" y="135.6" textLength="153.4" lengthAdjust="spacingAndGlyphs">Opérations permanentes en aval</text>
</g>
<!-- tabs -->
<g shape-rendering="crispEdges">
<rect x="39" y="812" width="90" height="25" fill="#f0f0f0"/>
<rect x="39" y="812" width="1" height="24" fill="#fff"/>
<rect x="128" y="813" width="1" height="24" fill="#000"/>
<rect x="41" y="837" width="87" height="1" fill="#000"/>
<rect x="130" y="814" width="66" height="20" fill="#f0f0f0"/>
<rect x="129" y="814" width="1" height="20" fill="#fff"/>
<rect x="196" y="814" width="1" height="20" fill="#000"/>
<rect x="131" y="834" width="65" height="1" fill="#000"/>
<rect x="198" y="814" width="73" height="20" fill="#f0f0f0"/>
<rect x="197" y="814" width="1" height="20" fill="#fff"/>
<rect x="271" y="814" width="1" height="20" fill="#000"/>
<rect x="199" y="834" width="72" height="1" fill="#000"/>
</g>
<g fill="#000" shape-rendering="crispEdges">
<!-- graphiques icon -->
<rect x="45" y="816" width="6" height="3"/><rect x="46" y="817" width="4" height="1" fill="#ffff80"/>
<rect x="48" y="819" width="1" height="11"/><rect x="48" y="822" width="4" height="1"/><rect x="48" y="827" width="4" height="1"/>
<rect x="52" y="821" width="5" height="3"/><rect x="53" y="822" width="3" height="1" fill="#fff"/>
<rect x="52" y="826" width="5" height="3"/><rect x="53" y="827" width="3" height="1" fill="#fff"/>
<!-- graphes icon -->
<rect x="134" y="815" width="5" height="3"/><rect x="135" y="816" width="3" height="1" fill="#fff"/>
<rect x="134" y="820" width="5" height="3"/><rect x="135" y="821" width="3" height="1" fill="#fff"/>
<rect x="134" y="825" width="5" height="3"/><rect x="135" y="826" width="3" height="1" fill="#fff"/>
<rect x="136" y="818" width="1" height="12"/><rect x="134" y="829" width="5" height="1"/>
<rect x="142" y="815" width="5" height="3"/><rect x="143" y="816" width="3" height="1" fill="#fff"/>
<rect x="142" y="820" width="5" height="3"/><rect x="143" y="821" width="3" height="1" fill="#fff"/>
<rect x="142" y="825" width="5" height="3"/><rect x="143" y="826" width="3" height="1" fill="#fff"/>
<rect x="144" y="818" width="1" height="12"/><rect x="142" y="829" width="5" height="1"/>
<rect x="139" y="821" width="1" height="1"/><rect x="141" y="821" width="1" height="1"/><rect x="139" y="826" width="1" height="1"/><rect x="141" y="826" width="1" height="1"/>
<!-- variables icon -->
<rect x="204" y="816" width="6" height="3"/><rect x="205" y="817" width="4" height="1" fill="#ffff80"/>
<rect x="207" y="819" width="1" height="11"/><rect x="207" y="822" width="4" height="1"/><rect x="207" y="826" width="4" height="1"/>
<rect x="211" y="821" width="5" height="3" fill="#000080"/><rect x="211" y="825" width="5" height="3" fill="#000080"/>
</g>
<g font-size="11.8" fill="#000">
<text x="63" y="829" textLength="54.5" lengthAdjust="spacingAndGlyphs">Graphiques</text>
<text x="151.5" y="827.6" textLength="39.5" lengthAdjust="spacingAndGlyphs">Graphes</text>
<text x="222" y="827.6" textLength="43.3" lengthAdjust="spacingAndGlyphs">Variables</text>
</g>
<!-- panel right border -->
<g shape-rendering="crispEdges">
<rect x="327" y="67" width="1" height="773" fill="#fafafa"/>
</g>
<!-- ===== STATUS BAR ===== -->
<g font-size="12.3" fill="#000">
<text x="2.5" y="856.3" textLength="199.5" lengthAdjust="spacingAndGlyphs">Pour obtenir de l'aide, appuyez sur F1.</text>
</g>
<g shape-rendering="crispEdges">
<rect x="1089" y="843" width="17" height="16" fill="#f0f0f0"/>
<rect x="1109" y="843" width="17" height="16" fill="#f0f0f0"/>
<rect x="1128" y="843" width="98" height="16" fill="#a8a8a8"/><rect x="1129" y="844" width="97" height="15" fill="#fff"/><rect x="1129" y="844" width="96" height="14" fill="#bdbdbd"/>
<rect x="1227" y="843" width="14" height="16" fill="#a8a8a8"/><rect x="1228" y="844" width="13" height="15" fill="#fff"/><rect x="1228" y="844" width="12" height="14" fill="#bdbdbd"/>
<rect x="1242" y="843" width="28" height="16" fill="#a8a8a8"/><rect x="1243" y="844" width="27" height="15" fill="#fff"/><rect x="1243" y="844" width="26" height="14" fill="#bdbdbd"/>
<rect x="1271" y="843" width="35" height="16" fill="#a8a8a8"/><rect x="1272" y="844" width="34" height="15" fill="#fff"/><rect x="1272" y="844" width="33" height="14" fill="#bdbdbd"/>
<rect x="1307" y="843" width="35" height="16" fill="#a8a8a8"/><rect x="1308" y="844" width="34" height="15" fill="#fff"/><rect x="1308" y="844" width="33" height="14" fill="#bdbdbd"/>
<rect x="1343" y="843" width="97" height="16" fill="#a8a8a8"/><rect x="1344" y="844" width="96" height="15" fill="#fff"/><rect x="1344" y="844" width="96" height="14" fill="#bdbdbd"/>
<!-- monitor icon -->
<rect x="1112" y="845" width="8" height="7" fill="#000"/><rect x="1113" y="846" width="6" height="5" fill="#fff"/><rect x="1114" y="847" width="3" height="1" fill="#000080"/>
<rect x="1115" y="852" width="2" height="1" fill="#000"/><rect x="1113" y="853" width="6" height="1" fill="#000"/>
</g>
<g font-size="12.3" fill="#000">
<text x="1131" y="856" textLength="34" lengthAdjust="spacingAndGlyphs">offline</text>
<text x="1246.5" y="856" textLength="20" lengthAdjust="spacingAndGlyphs">Abs</text>
<text x="1276" y="856" textLength="25.5" lengthAdjust="spacingAndGlyphs">Inser</text>
<text x="1310.5" y="856" textLength="27.5" lengthAdjust="spacingAndGlyphs">Mod.</text>
</g>
<!-- scrollbar -->
<g shape-rendering="crispEdges">
<rect x="1423" y="86" width="14" height="80" rx="2" fill="#a8a8a8"/>
<rect x="1424" y="87" width="12" height="78" fill="#e6e6e6"/>
<rect x="1430" y="87" width="6" height="78" fill="#d4d4d8"/>
<rect x="1427" y="122" width="6" height="1" fill="#555"/><rect x="1427" y="125" width="6" height="1" fill="#555"/><rect x="1427" y="128" width="6" height="1" fill="#555"/>
</g>
<path d="M1427 79h7l-3.5-3.5z" fill="#404040"/>
<path d="M1427 829h7l-3.5 3.5z" fill="#404040"/>
<!-- ===== TASKBAR ===== -->
<defs>
<linearGradient id="tbtn" x1="0" y1="0" x2="0" y2="1"><stop offset="0" stop-color="#7a7a80"/><stop offset="0.35" stop-color="#4a4a52"/><stop offset="1" stop-color="#2c2c34"/></linearGradient>
<linearGradient id="tbtna" x1="0" y1="0" x2="0" y2="1"><stop offset="0" stop-color="#d8d8dc"/><stop offset="0.4" stop-color="#a0a0a8"/><stop offset="1" stop-color="#8a8c94"/></linearGradient>
<radialGradient id="blob"><stop offset="0" stop-color="#8a9294" stop-opacity="0.75"/><stop offset="1" stop-color="#8a9294" stop-opacity="0"/></radialGradient>
<radialGradient id="blob2"><stop offset="0" stop-color="#6a6a74" stop-opacity="0.4"/><stop offset="1" stop-color="#6a6a74" stop-opacity="0"/></radialGradient>
<radialGradient id="sheen"><stop offset="0" stop-color="#d0e0f0" stop-opacity="0.5"/><stop offset="1" stop-color="#d0e0f0" stop-opacity="0"/></radialGradient>
<radialGradient id="orb" cx="0.5" cy="0.35" r="0.6"><stop offset="0" stop-color="#9ad0f0"/><stop offset="0.5" stop-color="#2a78b8"/><stop offset="1" stop-color="#0e3560"/></radialGradient>
<radialGradient id="wmp" cx="0.5" cy="0.5" r="0.5"><stop offset="0" stop-color="#ffb060"/><stop offset="1" stop-color="#e06010"/></radialGradient>
</defs>
<rect x="0" y="860" width="1440" height="1" fill="#141418"/>
<rect x="0" y="861" width="1440" height="1" fill="#8a8a94"/>
<rect x="0" y="899" width="1440" height="1" fill="#141418"/>
<clipPath id="tbclip"><rect x="0" y="862" width="1440" height="37"/></clipPath>
<g clip-path="url(#tbclip)">
<ellipse cx="770" cy="880" rx="75" ry="34" fill="url(#blob)"/>
<ellipse cx="75" cy="872" rx="45" ry="22" fill="url(#blob2)"/>
<ellipse cx="1000" cy="890" rx="80" ry="25" fill="url(#blob2)"/>
</g>
<!-- start orb -->
<defs>
<linearGradient id="orbtop" x1="0" y1="0" x2="0" y2="1"><stop offset="0" stop-color="#c8dcec"/><stop offset="1" stop-color="#5a86ac"/></linearGradient>
<radialGradient id="orbbot" cx="0.5" cy="1" r="0.7"><stop offset="0" stop-color="#18d0f8"/><stop offset="0.6" stop-color="#0a70b8"/><stop offset="1" stop-color="#0a3a78"/></radialGradient>
<linearGradient id="ieg" x1="0" y1="0" x2="0" y2="1"><stop offset="0" stop-color="#70d8fa"/><stop offset="1" stop-color="#1890e0"/></linearGradient>
</defs>
<circle cx="27" cy="880.5" r="18.5" fill="#1a2a40"/>
<circle cx="27" cy="880.5" r="17.8" fill="url(#orbbot)" stroke="#8ab0d0" stroke-width="0.8"/>
<path d="M9.5 879.5A17.5 17.5 0 0 1 44.5 879.5Q27 875 9.5 879.5z" fill="url(#orbtop)" opacity="0.9"/>
<path d="M18 871q4-2.5 9.5-1l-1.2 7.8q-5-1.3-9.5 0.8z" fill="#f0602a"/>
<path d="M28.5 870.2q4 1.5 9 0l-1.3 8q-4.5 1.5-9-0.3z" fill="#90c840"/>
<path d="M17 880.5q4.5-2 9.2-0.7l-1.2 7.8q-5-1.3-9.3 0.8z" fill="#28a8ec"/>
<path d="M27.2 879.8q4.5 1.5 8.8 0l-1.2 7.8q-4.5 1.5-8.8-0.2z" fill="#ffc820"/>
<!-- IE -->
<path d="M77 881a12.5 12.5 0 1 1 24.5 3.5h-17q1 6 7 6q4 0 6-3h4q-3 7-10 7q-14 0-14.5-13.5z M84.5 879.5h10q-1-5-5-5q-4 0-5 5z" fill="url(#ieg)" fill-rule="evenodd"/>
<path d="M76 893.5q-3-4 7-15q11-11 18-12.5q4-1 1 6" fill="none" stroke="#f8c820" stroke-width="2.2"/>
<!-- WMP -->
<rect x="137" y="869" width="25" height="25" fill="#a8c8e0" stroke="#6a90b0"/>
<rect x="159" y="871" width="4" height="23" fill="#c8e0f0"/>
<circle cx="148" cy="881" r="9" fill="url(#wmp)"/>
<path d="M145 875.5v11l8.5-5.5z" fill="#fff"/>
<!-- chrome -->
<circle cx="212.5" cy="880.5" r="15" fill="#dd4436"/>
<path d="M212.5 880.5L199.5 873q-3 6 0 14q3 6 9 8.5z" fill="#1da05a"/>
<path d="M212.5 880.5L225.5 873q3 6 0 13q-4 8-14 9.5z" fill="#fcc934"/>
<path d="M212.5 880.5l-13-7.5q3-5 6-6.5z" fill="#dd4436"/>
<circle cx="212.5" cy="880.5" r="6.5" fill="#fff"/>
<circle cx="212.5" cy="880.5" r="5" fill="#4a8af4"/>
<!-- buttons -->
<rect x="246.5" y="861.5" width="157" height="37" rx="3" fill="url(#tbtn)" stroke="#121216"/>
<rect x="247.5" y="862.5" width="155" height="35" rx="2" fill="none" stroke="#9a9aa0" stroke-opacity="0.5"/>
<path d="M248 886L402 868V863H248z" fill="#fff" opacity="0.06"/>
<rect x="408.5" y="861.5" width="157" height="37" rx="3" fill="url(#tbtn)" stroke="#121216"/>
<rect x="409.5" y="862.5" width="155" height="35" rx="2" fill="none" stroke="#9a9aa0" stroke-opacity="0.5"/>
<rect x="570.5" y="861.5" width="157" height="37" rx="3" fill="url(#tbtna)" stroke="#202024"/>
<rect x="571.5" y="862.5" width="155" height="35" rx="2" fill="none" stroke="#f0f0f4" stroke-opacity="0.6"/>
<ellipse cx="680" cy="890" rx="26" ry="10" fill="url(#sheen)"/>
<!-- VLC cone -->
<path d="M267 866h5l7 22h-12l-7 0z" fill="#f08010"/>
<path d="M266.5 873h6l1.5 5h-9z" fill="#e8e8e8"/>
<path d="M264.5 880h10l1.5 5h-13z" fill="#e8e8e8"/>
<path d="M258 886h24l2 9h-28z" fill="#f89820"/>
<path d="M263 886h14l-1 4h-12z" fill="#d86808"/>
<!-- SIMATIC icon -->
<rect x="417.5" y="864.5" width="31" height="31" fill="#b4b4b4" stroke="#e0e0e0"/>
<rect x="418" y="865" width="30" height="30" fill="#a8a8a8"/>
<path d="M424 886q-3-6 3-12q6-5 11-2q3 3-2 7l-7 6q-3 3-5 1z" fill="#000"/>
<ellipse cx="424" cy="889" rx="4" ry="3" fill="#000"/>
<text x="435" y="894" font-size="16" font-weight="bold" fill="#30d8e8" font-style="italic">7</text>
<!-- S7 graph icon -->
<rect x="579.5" y="864.5" width="31" height="31" fill="#d8d8d8" stroke="#000"/>
<g shape-rendering="crispEdges">
<rect x="583" y="867" width="7" height="4" fill="#000"/><rect x="584" y="868" width="5" height="2" fill="#fff"/>
<rect x="586" y="871" width="1" height="22" fill="#000"/>
<rect x="583" y="874" width="7" height="1" fill="#000"/>
<rect x="582" y="880" width="8" height="4" fill="#0018c0"/>
<rect x="583" y="888" width="7" height="1" fill="#000"/>
<rect x="586" y="876" width="20" height="1" fill="#000"/>
<rect x="594" y="876" width="1" height="17" fill="#000"/><rect x="604" y="876" width="1" height="6" fill="#000"/>
</g>
<text x="595" y="874" font-size="8" font-weight="bold" fill="#000">S1</text>
<path d="M598 881l8 8" stroke="#000" stroke-width="2.5"/>
<path d="M601 886l7 7" stroke="#f08020" stroke-width="2.5"/>
<g font-size="12.3" fill="#fff">
<text x="290.5" y="884.6" textLength="102" lengthAdjust="spacingAndGlyphs">Platoon.avi - Lect...</text>
<text x="452.5" y="884.6" textLength="101.5" lengthAdjust="spacingAndGlyphs">SIMATIC Manage...</text>
<text x="615" y="884.6" textLength="99" lengthAdjust="spacingAndGlyphs">S7-GRAPH - [FB2...</text>
<text x="1135.5" y="884" textLength="36.5" lengthAdjust="spacingAndGlyphs">Bureau</text>
<text x="1200" y="882" textLength="13" lengthAdjust="spacingAndGlyphs">FR</text>
<text x="1371.5" y="877" textLength="27" lengthAdjust="spacingAndGlyphs">19:54</text>
<text x="1355.5" y="894" textLength="58" lengthAdjust="spacingAndGlyphs">18/09/2017</text>
</g>
<path d="M1180 867l3 2.5l-3 2.5M1184 867l3 2.5l-3 2.5" fill="none" stroke="#fff" stroke-width="1.2"/>
<path d="M1229.5 883.5h8l-4-4.5z" fill="#fff"/>
<!-- tray icons -->
<path d="M1251 874v15" stroke="#fff" stroke-width="1.3"/>
<path d="M1251.5 874.5h7l1 1h4v5h-5l-1-1h-6z" fill="#f0f0f0"/>
<circle cx="1262" cy="885" r="4" fill="#e02020" stroke="#fff" stroke-width="1"/>
<path d="M1260 883l4 4M1264 883l-4 4" stroke="#fff" stroke-width="1"/>
<path d="M1277 876l4 4l4-5l3 3l-3 4l3 4l-3 3l-4-4l-4 4l-3-3l3-4l-3-3z" fill="#f58220"/>
<circle cx="1278" cy="886" r="3.5" fill="#4a80e8"/>
<rect x="1303.5" y="878.5" width="10" height="8" fill="none" stroke="#fff"/>
<path d="M1299 874v10h4M1301 874v3M1306 886v3h6" fill="none" stroke="#fff" stroke-width="1"/>
<path d="M1322 880h3l4-4v12l-4-4h-3z" fill="#fff"/>
<path d="M1331 879q2 3 0 6M1333.5 877q3 5 0 10" fill="none" stroke="#fff" stroke-width="1"/>
<!-- show desktop -->
<rect x="1426.5" y="861.5" width="13" height="37" fill="#3c3c44" stroke="#6a6a72"/>

</svg>
</body></html>
